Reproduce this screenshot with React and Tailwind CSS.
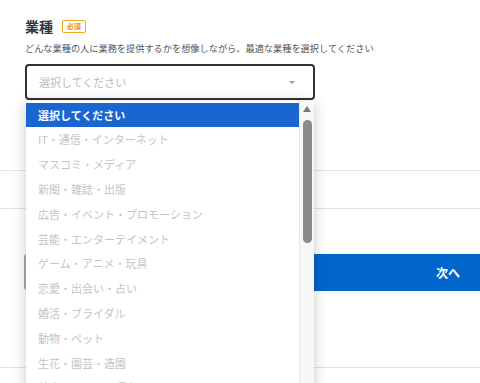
import React from 'react';

const options = [
    '選択してください',
    'IT・通信・インターネット',
    'マスコミ・メディア',
    '新聞・雑誌・出版',
    '広告・イベント・プロモーション',
    '芸能・エンターテイメント',
    'ゲーム・アニメ・玩具',
    '恋愛・出会い・占い',
    '婚活・ブライダル',
    '動物・ペット',
    '生花・園芸・造園',
    '美容・エステ・理容',
];

const App = () => {
    return (
        <div className="relative w-[480px] h-[383px] overflow-hidden bg-white font-['Noto_Sans_CJK_JP','Noto_Sans',sans-serif]">
            <div className="pl-[25px] pt-[18px]">
                <div className="flex items-center gap-[9px] h-[16px]">
                    <span className="text-[14px] font-bold text-[#333]">業種</span>
                    <span className="border border-[#f5a623] text-[#f08c00] text-[7px] font-bold leading-none px-[4px] py-[2px] rounded-[2px]">必須</span>
                </div>
                <p className="mt-[7px] text-[9.2px] text-[#555] leading-[14px] whitespace-nowrap">どんな業種の人に業務を提供するかを想像しながら、最適な業種を選択してください</p>
                <div className="mt-[9px] w-[290px] h-[36px] border-2 border-[#333] rounded-[4px] flex items-center justify-between pl-[12px] pr-[18px]">
                    <span className="text-[11px] text-[#bbb]">選択してください</span>
                    <span className="w-0 h-0 border-l-[3px] border-r-[3px] border-t-[3px] border-l-transparent border-r-transparent border-t-[#999]"></span>
                </div>

                <div className="mt-[70px] h-[38px] border-t border-[#e3e3e3] -ml-[25px]"></div>
                <div className="h-[46px] border-t border-[#e3e3e3] -ml-[25px]"></div>
                <div className="flex gap-[8px] -ml-[25px] pl-[24px]">
                    <div className="w-[8px] h-[36px] border-l-2 border-[#aaa] rounded-l-[3px] bg-[#f2f2f2]"></div>
                    <div className="flex-1 h-[37px] bg-[#0066cc] flex items-center justify-end pr-[20px]">
                        <span className="text-white text-[12px] font-bold">次へ</span>
                    </div>
                </div>
                <div className="mt-[76px] border-t border-[#e3e3e3] -ml-[25px]"></div>
            </div>

            <div className="absolute left-[26px] top-[101px] w-[288px] h-[300px] bg-white shadow-[0_2px_14px_rgba(0,0,0,0.22)] rounded-[3px] flex">
                <div className="flex-1 pt-[1.5px]">
                    {options.map((opt, i) => (
                        <div
                            key={opt}
                            className={`h-[24.8px] flex items-center pl-[12px] text-[11px] whitespace-nowrap ${i === 0 ? 'bg-[#1a66d0] text-white font-bold' : 'text-[#c4c4c4]'}`}
                        >
                            {opt}
                        </div>
                    ))}
                </div>
                <div className="w-[15px] bg-[#f7f7f7] border-l border-[#e8e8e8] flex flex-col items-center pt-[5px]">
                    <span className="w-0 h-0 border-l-[4px] border-r-[4px] border-b-[6px] border-l-transparent border-r-transparent border-b-[#777]"></span>
                    <div className="mt-[8px] w-[9px] h-[123px] rounded-full bg-[#8a8a8a]"></div>
                </div>
            </div>
        </div>
    );
};

export default App;
